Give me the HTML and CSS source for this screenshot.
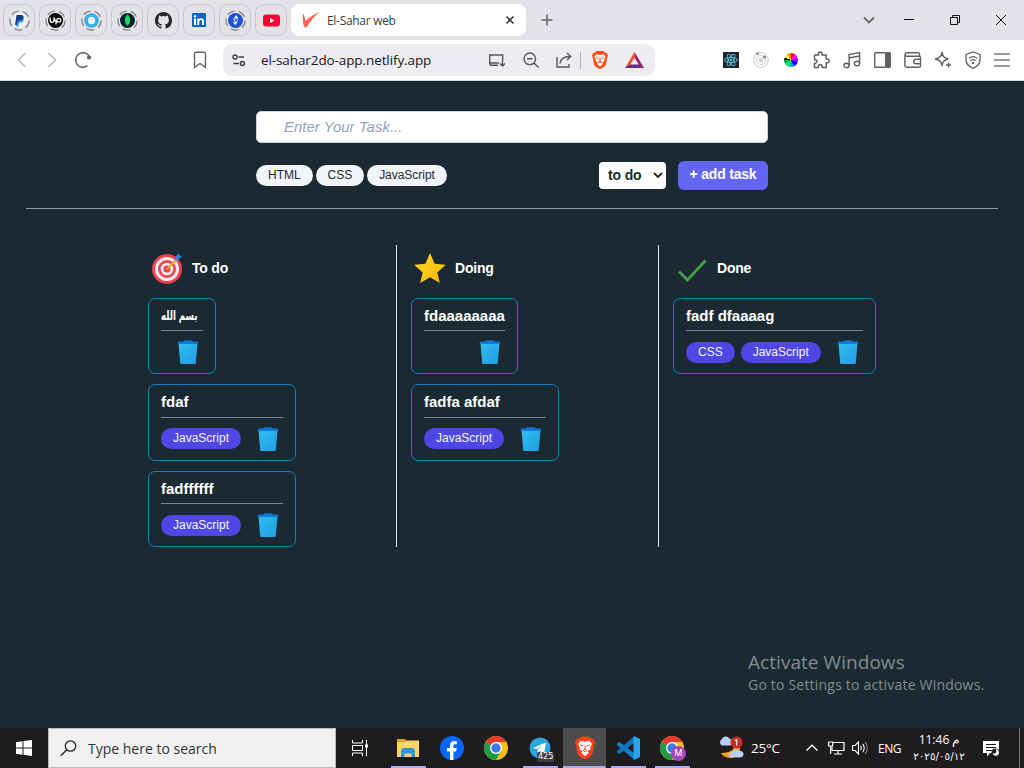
FILE: index.html
```html
<!DOCTYPE html>
<html lang="en">
<head>
<meta charset="utf-8">
<title>El-Sahar web</title>
<link rel="stylesheet" href="styles.css">
</head>
<body>
<header class="tabstrip">
  <div class="pins">
    <div class="pin"><svg width="21" height="21" viewBox="0 0 21 21"><circle class="dash" cx="10.500" cy="10.500" r="9.600"/><circle cx="10.500" cy="10.500" r="7.500" fill="#eef1f6"/><path d="M7.500 5h4.500c2 0 3 1.300 2.500 3-.4 2-2 3-4 3H9l-.7 4H6z" fill="#123a86"/><path d="M14.500 7.500c1.200 3-1 5-3.500 5h-1l-.7 4H7.200l.5-2.500h1l.7-3.500h1.500c1.800 0 3.200-1 3.600-3z" fill="#2093dc"/></svg></div>
    <div class="pin"><svg width="21" height="21" viewBox="0 0 21 21"><circle class="dash" cx="10.500" cy="10.500" r="9.600"/><circle cx="10.500" cy="10.500" r="7.500" fill="#080808"/><path d="M5.200 7.500v2.800c0 2.700 3.800 2.700 3.800 0V7.500c.5 2 1.300 3.500 2.300 4.700M10.800 14.500l1-4.500c.5-2.300 4-2 4 .3 0 2.200-3 2.500-4.200.8" fill="none" stroke="#fff" stroke-width="1.300"/></svg></div>
    <div class="pin"><svg width="21" height="21" viewBox="0 0 21 21"><circle class="dash" cx="10.500" cy="10.500" r="9.600"/><circle cx="10.500" cy="10.500" r="5.500" fill="#eaf3fa" stroke="#38aee6" stroke-width="3.600"/></svg></div>
    <div class="pin"><svg width="21" height="21" viewBox="0 0 21 21"><circle class="dash" cx="10.500" cy="10.500" r="9.600"/><circle cx="10.500" cy="10.500" r="7.500" fill="#04202a"/><path d="M10.500 4.200c4 4 3 9 0 11.500-3-2.500-4-7.500 0-11.500z" fill="#12dc62"/></svg></div>
    <div class="pin"><svg width="17" height="17" viewBox="0 0 16 16"><path fill="#22252a" d="M8 0C3.580 0 0 3.580 0 8c0 3.540 2.290 6.530 5.470 7.590.4.070.55-.17.55-.38 0-.19-.01-.82-.01-1.490-2.010.37-2.530-.49-2.690-.94-.09-.23-.48-.94-.82-1.130-.28-.15-.68-.52-.01-.53.63-.01 1.080.58 1.230.82.720 1.210 1.870.87 2.330.66.070-.52.28-.87.510-1.070-1.780-.2-3.640-.89-3.640-3.950 0-.87.310-1.590.82-2.150-.08-.2-.36-1.020.080-2.120 0 0 .67-.21 2.200.82a7.600 7.600 0 0 1 4 0c1.530-1.040 2.200-.82 2.200-.82.44 1.100.16 1.920.080 2.120.51.56.82 1.270.82 2.150 0 3.070-1.870 3.750-3.650 3.950.29.25.54.73.54 1.480 0 1.070-.01 1.930-.01 2.200 0 .21.150.46.55.38A8 8 0 0 0 16 8c0-4.420-3.580-8-8-8z"/></svg></div>
    <div class="pin"><svg width="14" height="14" viewBox="0 0 14 14"><rect width="14" height="14" rx="1" fill="#0a66c2"/><path d="M2 5.400h2V12H2zM5.300 5.400h2v.9c.9-1.500 4.700-1.700 4.700 1.900V12h-2V8.500c0-2.200-2.700-1.900-2.700 0V12h-2z" fill="#fff"/><circle cx="3" cy="3.200" r="1.200" fill="#fff"/></svg></div>
    <div class="pin"><svg width="21" height="21" viewBox="0 0 21 21"><circle class="dash" cx="10.500" cy="10.500" r="9.600"/><circle cx="10.500" cy="10.500" r="7.500" fill="#1d4fd7"/><path d="M11.200 5l2 2.800-1 1.700 1 1.700-2.900 4-2.200-2.600 1.300-2L8.200 9z" fill="#e8efff"/><path d="M9.500 8l3 4M12 8.500l-3 4" stroke="#1d4fd7"/></svg></div>
    <div class="pin"><svg width="17" height="13" viewBox="0 0 17 13"><rect y=".5" width="17" height="12" rx="3.200" fill="#ff0033"/><path d="M7 4l4.400 2.500L7 9z" fill="#fff"/></svg></div>
  </div>
  <div class="tab">
    <svg width="18" height="16" viewBox="0 0 18 16"><path d="M1 1.500c.8 0 1.900 4 2.500 7.500C7 5.500 11.500 2.500 17.500 0 12 4.500 8 9.500 4.800 15 3 16 1.800 15 1.300 12 .8 8 .6 5 1 1.500z" fill="#ff6250"/></svg>
    <span class="tab-title">El-Sahar web</span>
    <svg width="10" height="10" viewBox="0 0 10 10"><path d="M1.500 1.500l7 7M8.500 1.500l-7 7" stroke="#3c3c40" stroke-width="1.600"/></svg>
  </div>
  <svg class="newtab" width="12" height="12" viewBox="0 0 12 12"><path d="M6 .5v11M.5 6h11" stroke="#66666b" stroke-width="1.500"/></svg>
  <div class="winctl">
    <svg width="12" height="8" viewBox="0 0 12 8"><path d="M1 1.500l5 5 5-5" fill="none" stroke="#66666b" stroke-width="1.800"/></svg>
    <svg width="10" height="10" viewBox="0 0 10 10"><path d="M0 4.500h10" stroke="#111"/></svg>
    <svg width="10" height="10" viewBox="0 0 10 10"><path d="M.5 2.500h7v7h-7zM2.500 2.500v-2h7v7h-2" fill="none" stroke="#111"/></svg>
    <svg width="10" height="10" viewBox="0 0 10 10"><path d="M0 0l10 10M10 0L0 10" stroke="#111"/></svg>
  </div>
</header>

<nav class="toolbar">
  <div class="navs">
    <svg width="10" height="16" viewBox="0 0 10 16"><path d="M8.500 1L1.500 8l7 7" fill="none" stroke="#b9b9bd" stroke-width="1.400"/></svg>
    <svg width="10" height="16" viewBox="0 0 10 16"><path d="M1.500 1l7 7-7 7" fill="none" stroke="#b9b9bd" stroke-width="1.400"/></svg>
    <svg width="18" height="18" viewBox="0 0 18 18"><path d="M13.500 14.700A7.300 7.300 0 1 1 15.600 6" fill="none" stroke="#5f6066" stroke-width="1.500"/><circle cx="15" cy="6.500" r="2.100" fill="#5f6066"/></svg>
  </div>
  <svg class="bookmark" width="14" height="18" viewBox="0 0 14 18"><path d="M1.500 3c0-1 .5-1.700 1.500-1.700h8c1 0 1.500.7 1.500 1.700v13.300L7 12.500l-5.500 3.800z" fill="none" stroke="#5f6066" stroke-width="1.400"/></svg>
  <div class="address">
    <svg width="14" height="14" viewBox="0 0 14 14"><g fill="none" stroke="#3c3c42" stroke-width="1.400"><circle cx="3" cy="4" r="2"/><path d="M6.500 4H12M1.500 10.500H7"/><circle cx="10.500" cy="10.500" r="2"/></g></svg>
    <span class="url">el-sahar2do-app.netlify.app</span>
    <div class="addr-icons">
      <svg width="18" height="14" viewBox="0 0 18 14"><path d="M10 12.300H3c-1 0-1.300-.3-1.300-1.300V2h13v5M1 10h10M14.500 7v5.500M12 10.500l2.500 2.500 2.500-2.500" fill="none" stroke="#55565c" stroke-width="1.400"/></svg>
      <svg width="16" height="16" viewBox="0 0 16 16"><g fill="none" stroke="#55565c" stroke-width="1.400"><circle cx="6.800" cy="6.800" r="5.800"/><path d="M4 6.800h5.600M11 11l4.500 4.500"/></g></svg>
      <svg width="16" height="16" viewBox="0 0 16 16"><path d="M1 5v10h12v-3M4 11.500C4.500 6.500 7.500 4.500 14 4.500M11 1l3.700 3.500L11 8" fill="none" stroke="#55565c" stroke-width="1.400"/></svg>
      <i class="sep"></i>
      <svg class="lion" width="16" height="18" viewBox="0 0 16 18"><path d="M4.500 0h7l1.600 1.700 1.800.2L16 5l-.7 1.200L14 13.500c-1 2-4 3.700-6 4.500-2-.8-5-2.500-6-4.500L.7 6.200 0 5l1.100-3.100 1.800-.2z" fill="#fb5017"/><path d="M4.500 3.200L8 4l3.500-.8 2 2.600-1.300 2.600.3 1.600-2.500 1.500 1 1.300-3 2.700-3-2.700 1-1.300L3.500 10l.3-1.600-1.300-2.600z" fill="#fff"/><path d="M4 6.500l2.700 1M12 6.500l-2.700 1M8 7v3M6.500 11L8 10l1.500 1L8 12z" stroke="#fb5017" fill="none"/></svg>
      <svg width="19" height="16" viewBox="0 0 19 16"><path d="M9.500 0L0 16l5-3 4.500-7.500z" fill="#ff4724"/><path d="M9.500 0L19 16l-5-3-4.500-7.500z" fill="#9e1f63"/><path d="M0 16l5-3.500h9l5 3.500z" fill="#662d91"/></svg>
    </div>
  </div>
  <div class="exts">
    <svg width="16" height="16" viewBox="0 0 16 16"><rect width="16" height="16" fill="#202226"/><g fill="none" stroke="#58c4e8" stroke-width=".9"><ellipse cx="8" cy="8" rx="6.500" ry="2.500"/><ellipse cx="8" cy="8" rx="6.500" ry="2.500" transform="rotate(60 8 8)"/><ellipse cx="8" cy="8" rx="6.500" ry="2.500" transform="rotate(120 8 8)"/></g><circle cx="8" cy="8" r="1.300" fill="#58c4e8"/></svg>
    <svg width="16" height="16" viewBox="0 0 16 16"><g fill="none" stroke="#d2d2d2" stroke-width="1.200"><circle cx="8" cy="8" r="7.300"/><circle cx="8" cy="8" r="4.500"/></g><circle cx="8" cy="8" r="2.300" fill="#cfcfcf"/><circle cx="4.500" cy="1.700" r="1.600" fill="#999"/><circle cx="11.500" cy="5" r="1.600" fill="#888"/></svg>
    <i class="wheel"></i>
    <svg width="18" height="18" viewBox="0 0 18 18"><path d="M2.500 4h4c-1-4 4.500-4 3.700 0h4v4c4-.6 4 4.400 0 3.800v4.700h-4c.8-4-4.700-4-3.700 0h-4v-4.300c3.300.5 3.300-4 0-3.500z" fill="none" stroke="#5f6066" stroke-width="1.500" stroke-linejoin="round"/></svg>
    <svg width="18" height="18" viewBox="0 0 18 18"><g fill="none" stroke="#5f6066" stroke-width="1.400"><ellipse cx="3.500" cy="14.500" rx="2.600" ry="2.200"/><ellipse cx="14" cy="12.500" rx="2.600" ry="2.200"/><path d="M6.100 14.500V3.500l10.500-2v11M6.100 7l10.500-2"/></g></svg>
    <svg width="17" height="16" viewBox="0 0 17 16"><rect x=".7" y=".7" width="15.600" height="14.600" rx=".8" fill="none" stroke="#5f6066" stroke-width="1.400"/><path d="M11 1h5v14h-5z" fill="#5f6066"/></svg>
    <svg width="18" height="16" viewBox="0 0 18 16"><g fill="none" stroke="#5f6066" stroke-width="1.400"><path d="M15.500 4.500V2.300c0-1-.5-1.500-1.500-1.500H2.800C.5.800.5 4.300 2.800 4.300H15c1 0 1.500.5 1.500 1.400v8c0 1-.5 1.500-1.500 1.500H3c-1.300 0-2.100-.7-2.100-2V2.500"/><path d="M16.500 7.200H12c-3 0-3 4.600 0 4.600h4.500"/></g></svg>
    <svg width="18" height="18" viewBox="0 0 18 18"><path d="M8 1.500c.8 4 2 5.300 6 6.500-4 1.200-5.200 2.500-6 6.500-.8-4-2-5.300-6.500-6.500C6 6.800 7.200 5.500 8 1.500zM14.500 11.500v5M12 14h5" fill="none" stroke="#5f6066" stroke-width="1.400" stroke-linejoin="round"/></svg>
    <svg width="16" height="18" viewBox="0 0 16 18"><g fill="none" stroke="#5f6066" stroke-width="1.300"><path d="M8 1l7 2.500V9c0 4-3 6.500-7 8.300C4 15.500 1 13 1 9V3.500z"/><path d="M3.800 7.300c2.600-2 5.800-2 8.400 0M5.400 9.600c1.600-1.200 3.600-1.200 5.200 0"/></g><circle cx="8" cy="12" r="1.200" fill="#5f6066"/></svg>
    <svg width="16" height="14" viewBox="0 0 16 14"><path d="M0 1h16M0 7h16M0 13h16" stroke="#77787d" stroke-width="1.500"/></svg>
  </div>
</nav>

<main class="app">
  <form class="composer">
    <input class="task-input" type="text" placeholder="Enter Your Task...">
    <div class="controls">
      <div class="choices"><span class="tag light">HTML</span><span class="tag light">CSS</span><span class="tag light">JavaScript</span></div>
      <div class="status"><span>to do</span><svg width="10" height="7" viewBox="0 0 10 7"><path d="M1 1l4 4 4-4" fill="none" stroke="#1b2a32" stroke-width="1.900"/></svg></div>
      <button class="add" type="button">+ add task</button>
    </div>
  </form>
  <hr class="divider">
  <section class="board">
    <div class="column">
      <h2 class="heading"><svg width="32" height="32" viewBox="0 0 32 32"><circle cx="16" cy="17" r="15" fill="#f23f51"/><circle cx="16" cy="17" r="12" fill="#f0eef2"/><circle cx="16" cy="17" r="9" fill="#f23f51"/><circle cx="16" cy="17" r="6.300" fill="#f0eef2"/><circle cx="16" cy="17" r="3.500" fill="#f23f51"/><path d="M15.500 17.500L27 6" stroke="#e0ad26" stroke-width="2"/><path d="M24 8V5l4-4 .5 2.500L31 4l-4 4.500z" fill="#2e7fd0"/></svg><span>To do</span></h2>
      <article class="card"><h3 class="title arabic"><span>بسم الله</span></h3><div class="foot"><svg class="trash" viewBox="0 0 30 30"><use href="#bin"/></svg></div></article>
      <article class="card"><h3 class="title">fdaf</h3><div class="foot"><span class="tag">JavaScript</span><svg class="trash" viewBox="0 0 30 30"><use href="#bin"/></svg></div></article>
      <article class="card"><h3 class="title">fadffffff</h3><div class="foot"><span class="tag">JavaScript</span><svg class="trash" viewBox="0 0 30 30"><use href="#bin"/></svg></div></article>
    </div>
    <div class="column">
      <h2 class="heading"><svg width="32" height="32" viewBox="0 0 32 32"><defs><linearGradient id="gold" x1="0" y1="0" x2="1" y2="1"><stop stop-color="#ffdb1f"/><stop offset="1" stop-color="#fdb40d"/></linearGradient></defs><path d="M16 1l4.600 10.800 11.200 1-8.500 7.700L25.800 31 16 25.300 6.200 31l2.500-10.500L.2 12.800l11.200-1z" fill="url(#gold)"/></svg><span>Doing</span></h2>
      <article class="card"><h3 class="title">fdaaaaaaaa</h3><div class="foot"><svg class="trash" viewBox="0 0 30 30"><use href="#bin"/></svg></div></article>
      <article class="card"><h3 class="title">fadfa afdaf</h3><div class="foot"><span class="tag">JavaScript</span><svg class="trash" viewBox="0 0 30 30"><use href="#bin"/></svg></div></article>
    </div>
    <div class="column">
      <h2 class="heading"><svg width="32" height="32" viewBox="0 0 32 32"><path d="M3 19.500l8.500 8.500L29.500 8.500" fill="none" stroke="#41a046" stroke-width="2.900"/></svg><span>Done</span></h2>
      <article class="card"><h3 class="title">fadf dfaaaag</h3><div class="foot"><span class="tag">CSS</span><span class="tag">JavaScript</span><svg class="trash" viewBox="0 0 30 30"><use href="#bin"/></svg></div></article>
    </div>
  </section>
  <svg class="sprite" width="0" height="0"><defs><linearGradient id="blue" x1="0" y1="0" x2="1" y2="1"><stop stop-color="#32bdef"/><stop offset="1" stop-color="#1e9fe6"/></linearGradient><g id="bin"><path d="M5.500 6.200h19l-1.700 19.600c0 .8-.4 1.200-1 1.200H8.200c-.6 0-1-.4-1-1.200z" fill="url(#blue)"/><path d="M4.500 6.700c0-1.400.6-2.200 2-2.200H10l1.300-1.300h7.400L20 4.500h3.500c1.400 0 2 .8 2 2.200z" fill="#0b78d4"/></g></defs></svg>
  <aside class="watermark"><p class="wm-big">Activate Windows</p><p class="wm-small">Go to Settings to activate Windows.</p></aside>
</main>

<footer class="taskbar">
  <div class="start"><svg width="16" height="16" viewBox="0 0 16 16"><path d="M0 2.200L6.500 1.300V7.500H0zM7.500 1.100L16 0v7.500H7.500zM0 8.500h6.500v6.200L0 13.800zM7.500 8.500H16V16l-8.500-1.200z" fill="#fff"/></svg></div>
  <div class="search"><svg width="17" height="17" viewBox="0 0 17 17"><g fill="none" stroke="#222" stroke-width="1.300"><circle cx="10.500" cy="6" r="5.200"/><path d="M6.800 9.700L.8 15.700"/></g></svg><span>Type here to search</span></div>
  <div class="slots">
    <div class="slot view"><svg width="18" height="16" viewBox="0 0 18 16"><path d="M1.500 0v3h10V0M1.500 16v-3h10v3M1.500 5.500h10v5h-10zM15.500 0v16" fill="none" stroke="#fff"/><path d="M14 4.500h3v3h-3z" fill="#fff"/></svg></div>
    <div class="slot on"><svg width="24" height="20" viewBox="0 0 24 20"><path d="M1 1h8l2 2h11v5H1z" fill="#dfa11b"/><path d="M1 4h8l2-1.500h12V19H1z" fill="#fcd665"/><path d="M5 19v-7l2-2h10l2 2v7h-3.500v-3.500h-7V19z" fill="#2f94dc"/></svg></div>
    <div class="slot"><svg width="24" height="24" viewBox="0 0 24 24"><circle cx="12" cy="12" r="12" fill="#0866ff"/><path d="M10 24v-8.500H7V12h3v-2.500C10 6.300 11.700 5 14.500 5l2.300.2v3H15c-1.300 0-1.600.6-1.600 1.700V12h3.300l-.6 3.500h-2.700V24z" fill="#fff"/></svg></div>
    <div class="slot"><svg width="24" height="24" viewBox="0 0 24 24"><use href="#chrome"/></svg></div>
    <div class="slot on"><div class="badged"><svg width="22" height="22" viewBox="0 0 22 22"><circle cx="11" cy="11" r="10.500" fill="#2ca5e0"/><path d="M4 11l13-5.500-2 11.500-4-3-2 2-.5-3.500L14 8.500 7.500 12z" fill="#fff"/></svg><b class="count">425</b></div></div>
    <div class="slot on active"><svg width="20" height="24" viewBox="0 0 16 18"><path d="M4.500 0h7l1.600 1.700 1.800.2L16 5l-.7 1.200L14 13.500c-1 2-4 3.700-6 4.500-2-.8-5-2.500-6-4.500L.7 6.200 0 5l1.100-3.100 1.800-.2z" fill="#ff401b"/><path d="M4.500 3.200L8 4l3.500-.8 2 2.600-1.300 2.600.3 1.600-2.500 1.500 1 1.300-3 2.700-3-2.700 1-1.300L3.500 10l.3-1.600-1.300-2.600z" fill="#fff"/><path d="M4 6.500l2.700 1M12 6.500l-2.700 1M8 7v3M6.500 11L8 10l1.500 1L8 12z" stroke="#ff401b" fill="none" stroke-width=".8"/></svg></div>
    <div class="slot on"><svg width="24" height="24" viewBox="0 0 24 24"><path d="M1 7.500L3.200 5.700 18 17v6.500L1 9z" fill="#1480c8"/><path d="M1 16.500l2.200 1.800L18 7V.5L1 15z" fill="#0f74bd"/><path d="M17.500 0L24 2.800v18.400L17.500 24z" fill="#28a6f2"/></svg></div>
    <div class="slot on"><div class="badged"><svg width="24" height="24" viewBox="0 0 24 24"><g id="chrome"><circle cx="12" cy="12" r="12" fill="#fbc116"/><path d="M12 12L1.600 6A12 12 0 0 1 22.400 6H12z" fill="#e33b2e"/><path d="M1.600 6A12 12 0 0 0 12 24l5.200-9L12 12z" fill="#249a48"/><circle cx="12" cy="12" r="6" fill="#fff"/><circle cx="12" cy="12" r="4.700" fill="#3a7de8"/></g></svg><b class="avatar">M</b></div></div>
  </div>
  <div class="tray">
    <svg width="26" height="24" viewBox="0 0 26 24"><path d="M14 6c5 5 1 11-11 11 4 7 17 7 19-2 .5-4-2-8-8-9z" fill="#f7a325"/><path d="M4 9.500a3.500 3.500 0 0 1-.5-6 4.500 4.500 0 0 1 8-1 4 4 0 0 1 1.500 7z" fill="#b6cff3"/><path d="M14 21.500c-4-.5-4-5 0-5.500a4.500 4.500 0 0 1 7.500-1c5-1 5.500 6 1 6.500z" fill="#b6cff3"/><circle cx="18.500" cy="6.500" r="6" fill="#c92e25"/><path d="M17 4.800l1.700-1v6" fill="none" stroke="#fff" stroke-width="1.100"/></svg>
    <span class="temp">25°C</span>
    <svg class="up" width="12" height="8" viewBox="0 0 12 8"><path d="M.5 6.500L6 1.200l5.500 5.300" fill="none" stroke="#fff" stroke-width="1.300"/></svg>
    <svg class="net" width="17" height="14" viewBox="0 0 17 14"><path d="M5 1.500h11v8H4V6M10 9.500v3M6 13h8" fill="none" stroke="#fff" stroke-width="1.200"/><path d="M.6 1h4v4h-4zM2.600 5v8" fill="none" stroke="#fff" stroke-width="1.200"/></svg>
    <svg class="vol" width="17" height="14" viewBox="0 0 17 14"><g fill="none" stroke="#fff" stroke-width="1.100"><path d="M.6 4.500h2.500L6.500 1v12L3.100 9.500H.6zM8.500 5c1 1 1 3 0 4M10.700 3c2 2 2 6 0 8"/><path d="M13 1.200c3 3 3 8.500 0 11.600" stroke="#888"/></g></svg>
    <span class="lang">ENG</span>
    <div class="clock"><span class="time">11:46 م</span><span class="date">٢٠٢٥/٠٥/١٢</span></div>
    <svg class="note" width="17" height="17" viewBox="0 0 17 17"><path d="M0 1h16v12H7l-3 3.500V13H0z" fill="#fff"/><path d="M3 4.500h10M3 7.500h10M3 10.500h6" stroke="#1e1e1e"/><circle cx="12.500" cy="12.500" r="4" fill="#1e1e1e"/><path d="M12.500 9c2.500 3-.5 5.500-3 4.300 1.500 4 7 2.800 6.500-1-.3-1.800-1.700-3.200-3.500-3.300z" fill="#fff"/></svg>
    <i class="peek"></i>
  </div>
</footer>
</body>
</html>
```

FILE: styles.css
```css
* { box-sizing: border-box; }
body {
  margin: 0;
  width: 1024px;
  height: 768px;
  overflow: hidden;
  display: flex;
  flex-direction: column;
  background: #1b2a32;
  font-family: "Liberation Sans", sans-serif;
}
svg { display: block; flex: none; }
h2, h3, p { margin: 0; }

/* tab strip */
.tabstrip { height: 40px; flex: none; display: flex; align-items: center; padding-left: 3px; background: #e3e2e7; }
.pins { display: flex; gap: 4px; }
.pin { width: 32px; height: 32px; display: flex; align-items: center; justify-content: center; border: 1px solid #c8c7cc; border-radius: 9px; }
.dash { fill: none; stroke: #77777c; stroke-width: 1.1; stroke-dasharray: 8 4.060; }
.tab { width: 235px; height: 32px; margin-left: 4px; padding: 0 11px 0 11px; display: flex; align-items: center; background: #fff; border-radius: 8px; }
.tab-title { flex: 1; margin-left: 7px; font: 12px "Open Sans", sans-serif; letter-spacing: -0.3px; color: #3c3c40; }
.newtab { margin-left: 15px; }
.winctl { margin-left: auto; padding-right: 18px; display: flex; align-items: center; gap: 36px; }
.winctl svg:first-child { margin-right: -7px; }

/* toolbar */
.toolbar { height: 41px; flex: none; display: flex; align-items: center; padding: 0 14px 0 17px; background: #fff; border-bottom: 1px solid #d5d8da; }
.navs { display: flex; align-items: center; gap: 20px; }
.navs svg:last-child { margin-left: -3px; }
.bookmark { margin-left: 101px; }
.address { width: 432px; height: 32px; margin-left: 16px; padding: 0 11px 0 9px; display: flex; align-items: center; border-radius: 9px; background: #edecf1; }
.url { flex: 1; margin-left: 15px; font: 13.500px "Open Sans", sans-serif; letter-spacing: -0.1px; color: #17171a; white-space: nowrap; }
.addr-icons { display: flex; align-items: center; gap: 17px; }
.sep { width: 1px; height: 17px; margin: 0 -6px 0 -9px; background: #b6b6bb; }
.exts { margin-left: auto; display: flex; align-items: center; gap: 13px; }
.exts svg:nth-child(2) { margin-left: 1px; }
.exts svg:nth-child(8) { margin-left: -1px; }
.wheel { width: 14px; height: 14px; margin: 0 1px 0 2px; border-radius: 50%; background: conic-gradient(red 0 30deg, #f0f 30deg 70deg, #a0f 70deg 110deg, #00f 110deg 150deg, #08f 150deg 180deg, #0cc 180deg 205deg, #0e5 205deg 245deg, #0a0 245deg 270deg, #000 270deg 290deg, #ff0 290deg 325deg, #f80 325deg); }

/* application */
.app { flex: 1; position: relative; display: flex; flex-direction: column; }
.composer { width: 512px; margin: 30px auto 0; }
.task-input { display: block; width: 100%; height: 32px; padding: 0 27px 2px; border: 1px solid #cbd5e1; border-radius: 5px; background: #fff; font: italic 15px "Liberation Sans", sans-serif; }
.task-input::placeholder { color: #94a3b8; }
.controls { display: flex; align-items: center; margin-top: 18px; }
.choices { display: flex; gap: 3px; flex: 1; }
.tag { height: 21px; padding: 0 12px; border-radius: 11px; background: #4f46e5; color: #f5f5ff; font-size: 12px; line-height: 21px; }
.tag.light { background: #f1f5f9; color: #1b2a32; letter-spacing: -0.03px; }
.status { width: 67px; height: 27px; padding: 0 3px 1px 9px; display: flex; align-items: center; justify-content: space-between; border-radius: 4px; background: #fff; color: #1b2a32; font-size: 14px; font-weight: 700; letter-spacing: -0.15px; }
.add { width: 90px; height: 29px; margin-left: 12px; padding: 0 0 3px; border: 0; border-radius: 6px; background: #6366f1; color: #fff; font: 700 14px "Liberation Sans", sans-serif; letter-spacing: -0.2px; }
.divider { width: 972px; height: 1px; margin: 18px auto 0; border: 0; background: #8d999d; }
.board { margin: 36px 0 0 148px; height: 301px; display: grid; grid-template-columns: 249px 262px 262px; }
.column { display: flex; flex-direction: column; align-items: flex-start; gap: 10px; padding-left: 14px; border-right: 1px solid #e2e8f0; }
.column:first-child { padding-left: 0; }
.column:last-child { border: 0; }
.heading { height: 42.800px; padding: 7px 0 0 3px; display: flex; gap: 9px; color: #fff; font-size: 14px; line-height: 32px; letter-spacing: -0.2px; }
.card { height: 76.500px; flex: none; padding: 6px 12px 0; border: 1px solid #0e82bd; border-radius: 7px; }
.title { height: 26.400px; border-bottom: 1px solid #7d878e; color: #fff; font-size: 15px; line-height: 22px; white-space: nowrap; }
.arabic { width: 42px; font-family: "DejaVu Sans", sans-serif; font-size: 13px; }
.arabic span { display: inline-block; transform: scaleX(.66); transform-origin: left center; }
.foot { display: flex; align-items: center; justify-content: flex-end; gap: 6px; margin-top: 6px; }
.trash { width: 30px; height: 30px; margin-left: 6px; }
.trash:first-child { margin-left: 12px; }
.sprite { position: absolute; }
.watermark { position: absolute; left: 748px; top: 568px; color: #828a8e; font-family: "Open Sans", sans-serif; white-space: nowrap; }
.wm-big { font-size: 19px; line-height: 26px; letter-spacing: 0.05px; }
.wm-small { font-size: 14px; line-height: 20px; letter-spacing: 0.2px; }

/* taskbar */
.taskbar { height: 40px; flex: none; display: flex; background: #1e1c1e; color: #fff; font-family: "Open Sans", sans-serif; }
.start { width: 48px; display: flex; align-items: center; justify-content: center; }
.search { width: 288px; display: flex; align-items: center; gap: 11px; padding-left: 11px; border: 1px solid #bcbcbc; background: #f1f1f1; color: #333; font-size: 14px; }
.slots { display: flex; margin-left: 2px; }
.slot { width: 44px; display: flex; align-items: center; justify-content: center; }
.slot.view { margin-right: 4px; }
.slot.on { background: linear-gradient(#b1aaf5, #b1aaf5) center bottom / 35px 2px no-repeat; }
.slot.active { background: linear-gradient(#b1aaf5, #b1aaf5) center bottom / 43px 2px no-repeat, #4d4d4e; background-clip: content-box; padding-left: 1px; }
.badged { position: relative; }
.count { position: absolute; left: 8px; top: 15px; padding: 0 1px; border-radius: 2px; background: #414143; font: 8px/10px "DejaVu Sans", sans-serif; }
.avatar { position: absolute; left: 11px; top: 10px; width: 15px; height: 15px; border-radius: 50%; background: #ab47bc; font: 9px/15px Roboto, sans-serif; text-align: center; }
.tray { flex: 1; display: flex; align-items: center; padding-right: 4px; margin-left: 24px; }
.temp { width: 55px; margin-left: 7px; font-size: 13.500px; letter-spacing: -0.2px; }
.net { margin-left: 10px; }
.vol { margin-left: 7px; }
.lang { width: 24px; margin-left: 9px; font-size: 12px; letter-spacing: -0.5px; }
.clock { width: 74px; display: flex; flex-direction: column; align-items: center; font-size: 12px; line-height: 17px; letter-spacing: -0.6px; }
.date { font-family: "DejaVu Sans", sans-serif; font-size: 10.400px; letter-spacing: 0; }
.note { margin-left: 7px; }
.peek { width: 1px; height: 40px; margin-left: auto; background: #777; }
```
